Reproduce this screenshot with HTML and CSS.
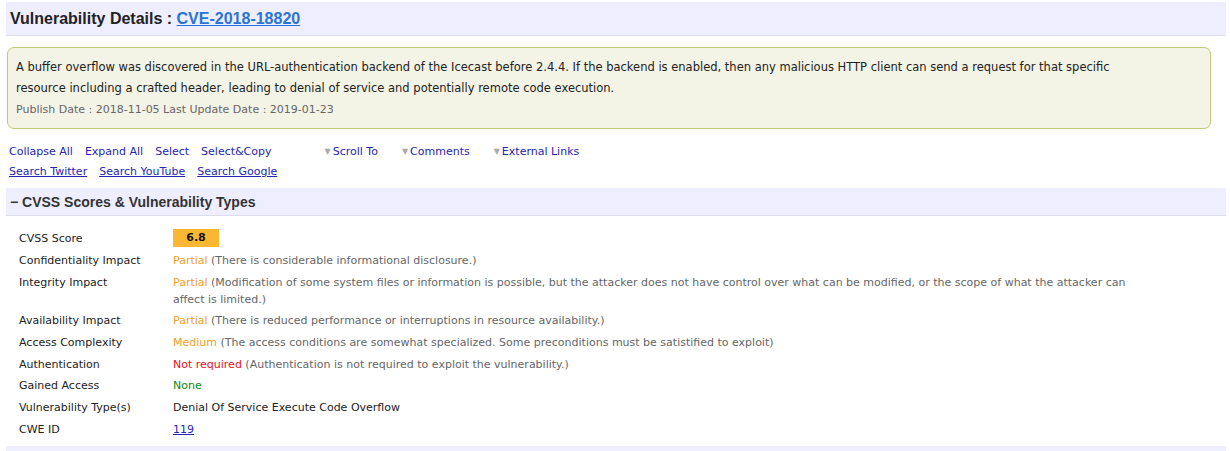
FILE: index.html
```html
<!DOCTYPE html>
<html>
<head>
<meta charset="utf-8">
<link rel="stylesheet" href="styles.css">
</head>
<body>
<div class="page">
  <h1 class="title-bar">Vulnerability Details : <a href="#" class="cve-link">CVE-2018-18820</a></h1>

  <div class="summary">
    <div class="summary-text">A buffer overflow was discovered in the URL-authentication backend of the Icecast before 2.4.4. If the backend is enabled, then any malicious HTTP client can send a request for that specific resource including a crafted header, leading to denial of service and potentially remote code execution.</div>
    <div class="dates">Publish Date : 2018-11-05 Last Update Date : 2019-01-23</div>
  </div>

  <div class="tools">
    <div class="tool-row">
      <a href="#" class="tool">Collapse All</a>
      <a href="#" class="tool">Expand All</a>
      <a href="#" class="tool">Select</a>
      <a href="#" class="tool wide">Select&amp;Copy</a>
      <a href="#" class="tool drop"><span class="tri">▼</span>Scroll To</a>
      <a href="#" class="tool drop"><span class="tri">▼</span>Comments</a>
      <a href="#" class="tool drop"><span class="tri">▼</span>External Links</a>
    </div>
    <div class="tool-row">
      <a href="#" class="tool u">Search Twitter</a>
      <a href="#" class="tool u">Search YouTube</a>
      <a href="#" class="tool u">Search Google</a>
    </div>
  </div>

  <div class="section-bar">− CVSS Scores &amp; Vulnerability Types</div>

  <table class="details">
    <tr><th>CVSS Score</th><td><span class="score">6.8</span></td></tr>
    <tr><th>Confidentiality Impact</th><td class="desc"><span class="orange">Partial</span> (There is considerable informational disclosure.)</td></tr>
    <tr><th>Integrity Impact</th><td class="desc"><span class="orange">Partial</span> (Modification of some system files or information is possible, but the attacker does not have control over what can be modified, or the scope of what the attacker can affect is limited.)</td></tr>
    <tr><th>Availability Impact</th><td class="desc"><span class="orange">Partial</span> (There is reduced performance or interruptions in resource availability.)</td></tr>
    <tr><th>Access Complexity</th><td class="desc"><span class="orange">Medium</span> (The access conditions are somewhat specialized. Some preconditions must be satistified to exploit)</td></tr>
    <tr><th>Authentication</th><td class="desc"><span class="red">Not required</span> (Authentication is not required to exploit the vulnerability.)</td></tr>
    <tr><th>Gained Access</th><td><span class="green">None</span></td></tr>
    <tr><th>Vulnerability Type(s)</th><td>Denial Of Service Execute Code Overflow</td></tr>
    <tr><th>CWE ID</th><td><a href="#" class="cwe">119</a></td></tr>
  </table>

  <div class="section-bar bottom"></div>
</div>
</body>
</html>
```

FILE: styles.css
```css
* { box-sizing: border-box; }
html, body { margin: 0; padding: 0; background: #fff; }
body {
  font-family: "DejaVu Sans", Verdana, sans-serif;
  font-size: 11px;
  color: #222;
}
.page { padding: 2px 4px 0 6px; }

.title-bar {
  margin: 0;
  height: 34px;
  background: #eeeeff;
  border-bottom: 1px solid #dcdcec;
  font-family: "Liberation Sans", Arial, sans-serif;
  font-weight: bold;
  font-size: 16px;
  line-height: 34px;
  padding-left: 4px;
  color: #222;
}
.cve-link { color: #2a74d6; text-decoration: underline; }

.summary {
  margin: 11px 15px 0 1px;
  height: 82px;
  background: #f3f3e6;
  border: 1px solid #c4c77a;
  border-radius: 7px;
  padding: 9px 70px 0 8px;
}
.summary-text { line-height: 21px; color: #222; font-size: 11.5px; }
.dates { color: #666; font-size: 11px; line-height: 21px; }

.tools { padding: 12px 0 0 3px; }
.tool-row { display: flex; height: 20px; align-items: center; }
.tool { color: #2626b0; text-decoration: none; margin-right: 12px; }
.tool.u { text-decoration: underline; }
.tool.wide { margin-right: 53px; }
.tool.drop { margin-right: 24px; }
.tri { color: #aaa; font-size: 8px; margin-right: 2px; vertical-align: 1px; }

.section-bar {
  margin-top: 7px;
  height: 28px;
  background: #eeeeff;
  border-bottom: 1px solid #dcdcec;
  font-family: "Liberation Sans", Arial, sans-serif;
  font-weight: bold;
  font-size: 14px;
  line-height: 29px;
  padding-left: 4px;
  color: #333;
}
.section-bar.bottom { margin-top: 6px; height: 10px; border: none; }

.details { border-collapse: collapse; margin: 12px 0 0 13px; }
.details th, .details td {
  text-align: left;
  vertical-align: top;
  font-weight: normal;
  line-height: 17px;
  padding: 2.35px 0;
}
.details th { width: 154px; color: #222; white-space: nowrap; }
.details td { width: 960px; color: #222; }
.details td.desc { color: #666; }
.orange { color: #f0a02a; }
.red { color: #e3141b; }
.green { color: #0b8a0b; }
.cwe { color: #2626b0; }
.score {
  display: inline-block;
  width: 46px;
  height: 18px;
  line-height: 18px;
  background: #fbb731;
  text-align: center;
  font-weight: bold;
  color: #111;
  vertical-align: top;
  margin-top: -1px;
}
```
